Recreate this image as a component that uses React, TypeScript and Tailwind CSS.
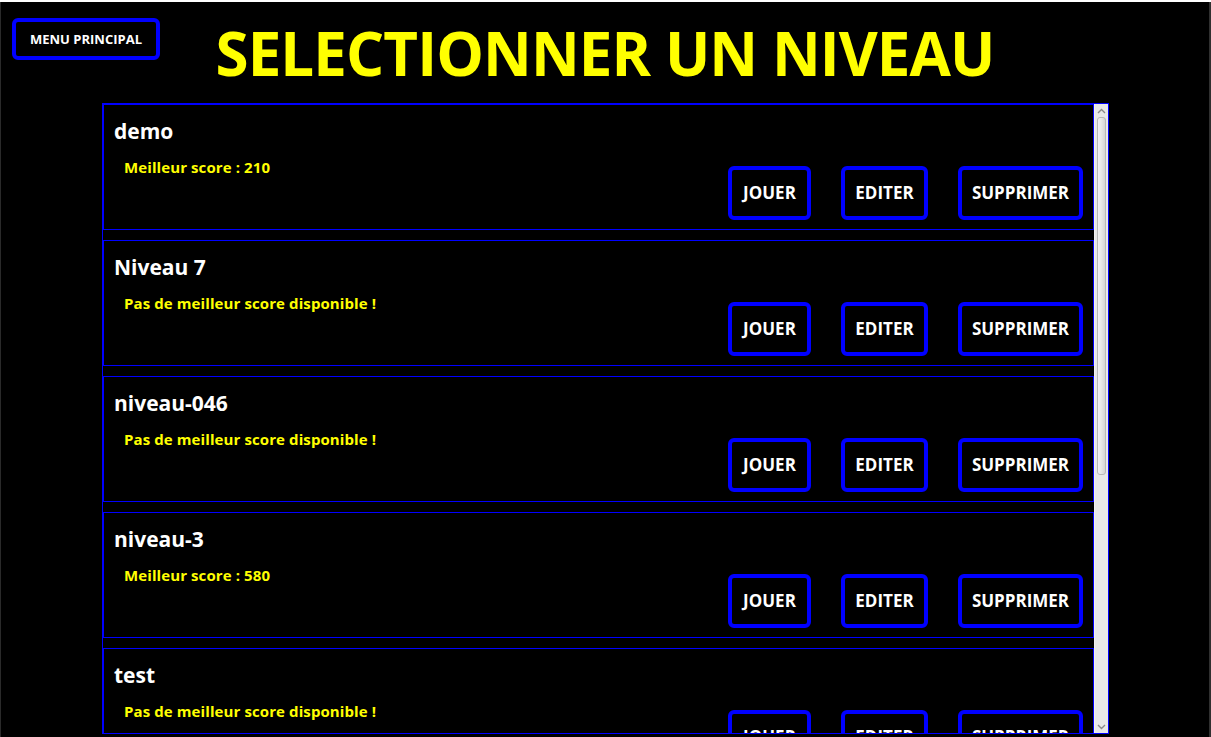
import React from "react";

type Level = { name: string; score: number | null };

const levels: Level[] = [
  { name: "demo", score: 210 },
  { name: "Niveau 7", score: null },
  { name: "niveau-046", score: null },
  { name: "niveau-3", score: 580 },
  { name: "test", score: null },
];

const font = { fontFamily: '"Open Sans", "Noto Sans", sans-serif' };

function ActionButton({ label, w }: { label: string; w: string }) {
  return (
    <button
      className={`h-[54px] ${w} border-[4px] border-[#0000ff] rounded-[6px] bg-black text-white font-bold text-[17px] leading-none flex items-center justify-center pb-[2px]`}
    >
      {label}
    </button>
  );
}

function LevelItem({ level }: { level: Level }) {
  return (
    <div className="h-[126px] shrink-0 border border-[#0000ff] mb-[10px] flex justify-between px-[10px] pb-[9px]">
      <div className="flex flex-col pt-[12px]">
        <div className="text-white font-bold text-[21px] leading-[28px]">{level.name}</div>
        <div className="text-[#ffff00] font-bold text-[15px] tracking-[0.1px] leading-[20px] mt-[12px] pl-[10px]">
          {level.score !== null
            ? `Meilleur score : ${level.score}`
            : "Pas de meilleur score disponible !"}
        </div>
      </div>
      <div className="self-end flex gap-[30px]">
        <ActionButton label="JOUER" w="w-[83px]" />
        <ActionButton label="EDITER" w="w-[87px]" />
        <ActionButton label="SUPPRIMER" w="w-[125px]" />
      </div>
    </div>
  );
}

function Scrollbar() {
  return (
    <div className="w-[14px] shrink-0 h-full bg-[#e8e8e8] flex flex-col border-l border-[#f2f2f2]">
      <div className="h-[13px] flex items-center justify-center">
        <svg width="9" height="6" viewBox="0 0 9 6">
          <path d="M1 5 L4.5 1.5 L8 5" fill="none" stroke="#8a8a8a" strokeWidth="1.4" />
        </svg>
      </div>
      <div className="h-[358px] mx-[2px] rounded-[3px] border border-[#b8b8b8] bg-gradient-to-r from-[#f4f4f4] via-[#e6e6e6] to-[#d4d4d4]" />
      <div className="flex-1" />
      <div className="h-[13px] flex items-center justify-center">
        <svg width="9" height="6" viewBox="0 0 9 6">
          <path d="M1 1 L4.5 4.5 L8 1" fill="none" stroke="#8a8a8a" strokeWidth="1.4" />
        </svg>
      </div>
    </div>
  );
}

export default function App() {
  return (
    <div className="w-full h-screen bg-black overflow-hidden flex flex-col" style={font}>
      <div className="h-[2px] bg-white shrink-0" />
      <div className="flex-1 flex flex-col border-l border-[#2a2a2a] border-r-2 border-r-[#303030] min-h-0">
        <div className="h-[101px] shrink-0 grid grid-cols-[1fr_auto_1fr] items-start">
          <div className="pl-[11px] pt-[16px]">
            <button className="w-[148px] h-[42px] border-[4px] border-[#0000ff] rounded-[6px] bg-black text-white font-bold text-[13px] leading-none flex items-center justify-center">
              MENU PRINCIPAL
            </button>
          </div>
          <div className="pt-[21px] text-[#ffff00] font-bold text-[60px] leading-[60px] tracking-[-0.9px] whitespace-nowrap">
            SELECTIONNER UN NIVEAU
          </div>
          <div />
        </div>
        <div className="ml-[101px] w-[1007px] h-[631px] shrink-0 border border-[#0000ff] flex overflow-hidden">
          <div className="flex-1 flex flex-col overflow-hidden">
            {levels.map((l) => (
              <LevelItem key={l.name} level={l} />
            ))}
          </div>
          <Scrollbar />
        </div>
      </div>
    </div>
  );
}
